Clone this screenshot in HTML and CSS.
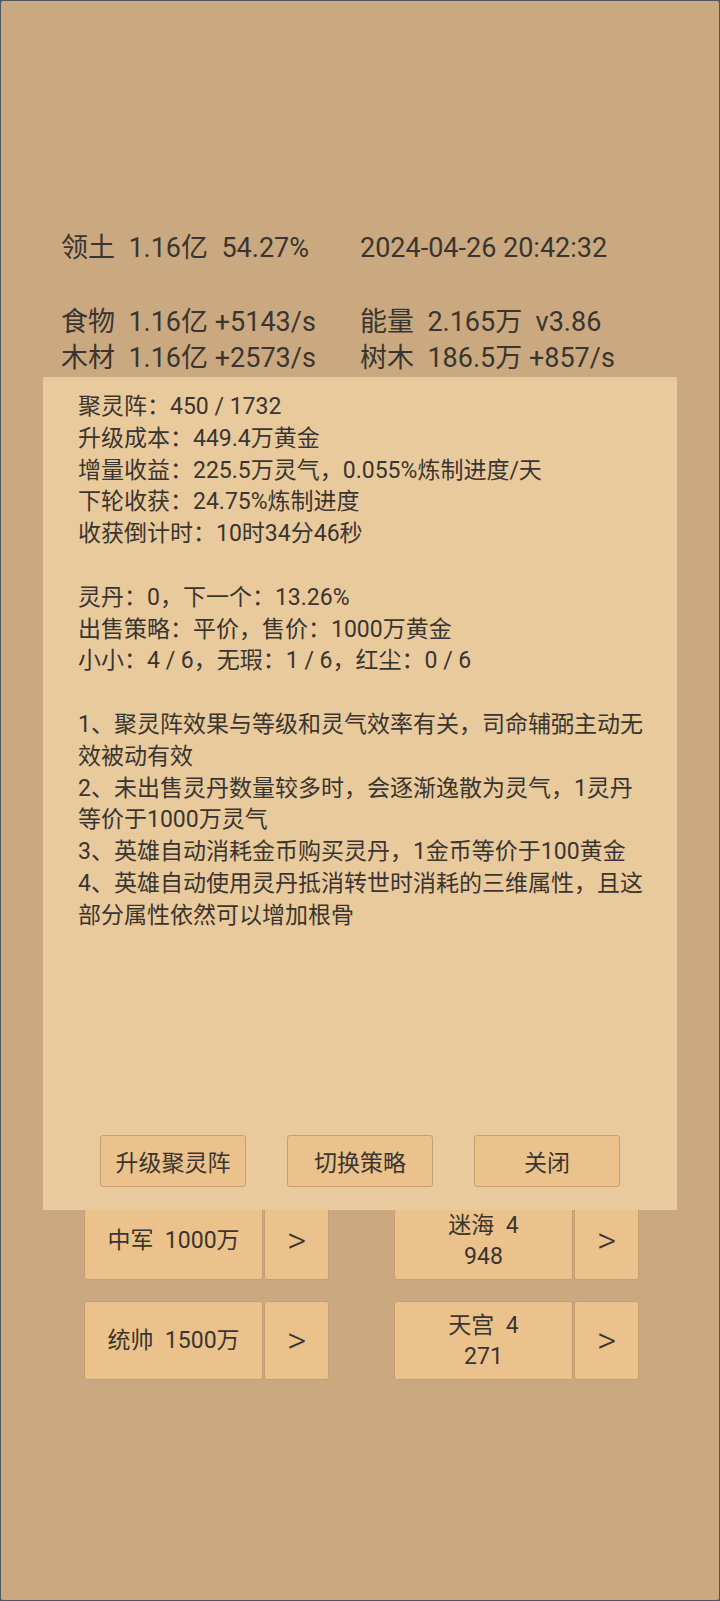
FILE: index.html
```html
<!DOCTYPE html>
<html lang="zh">
  <head>
    <meta charset="UTF-8" />
    <meta name="viewport" content="width=device-width, initial-scale=1.0" />
    <title>聚灵阵</title>
    <link rel="stylesheet" href="styles.css">
  </head>
  <body>
    <div class="screen">
      <section class="stats">
        <div class="stat-row">
          <span>领土  1.16亿  54.27%</span>
          <span>2024-04-26 20:42:32</span>
        </div>
        <div class="stat-grid">
          <span>食物  1.16亿 +5143/s</span>
          <span>能量  2.165万  v3.86</span>
          <span>木材  1.16亿 +2573/s</span>
          <span>树木  186.5万 +857/s</span>
        </div>
      </section>

      <section class="actions">
        <div class="action-row">
          <div class="action-group">
            <button class="action-main">中军  1000万</button>
            <button class="action-go">&gt;</button>
          </div>
          <div class="action-group">
            <button class="action-main">迷海  4<br />948</button>
            <button class="action-go">&gt;</button>
          </div>
        </div>
        <div class="action-row">
          <div class="action-group">
            <button class="action-main">统帅  1500万</button>
            <button class="action-go">&gt;</button>
          </div>
          <div class="action-group">
            <button class="action-main">天宫  4<br />271</button>
            <button class="action-go">&gt;</button>
          </div>
        </div>
      </section>

      <div class="dialog">
        <div class="dialog-body">
          <p>
            聚灵阵：450 / 1732<br />
            升级成本：449.4万黄金<br />
            增量收益：225.5万灵气，0.055%炼制进度/天<br />
            下轮收获：24.75%炼制进度<br />
            收获倒计时：10时34分46秒
          </p>
          <p>
            灵丹：0，下一个：13.26%<br />
            出售策略：平价，售价：1000万黄金<br />
            小小：4 / 6，无瑕：1 / 6，红尘：0 / 6
          </p>
          <p>
            1、聚灵阵效果与等级和灵气效率有关，司命辅弼主动无效被动有效<br />
            2、未出售灵丹数量较多时，会逐渐逸散为灵气，1灵丹等价于1000万灵气<br />
            3、英雄自动消耗金币购买灵丹，1金币等价于100黄金<br />
            4、英雄自动使用灵丹抵消转世时消耗的三维属性，且这部分属性依然可以增加根骨
          </p>
        </div>
        <div class="dialog-buttons">
          <button class="dialog-btn">升级聚灵阵</button>
          <button class="dialog-btn">切换策略</button>
          <button class="dialog-btn">关闭</button>
        </div>
      </div>
    </div>
  </body>
</html>
```

FILE: styles.css
```css
/* Spirit array dialog over the city screen */

body {
  margin: 0;
  padding: 0;
  font-family: Roboto, "Noto Sans CJK SC", sans-serif;
  color: #3a3530;
  background-color: #4f5561;
}

.screen {
  position: relative;
  height: 1601px;
  box-sizing: border-box;
  border: 1px solid #4f5561;
  border-radius: 3px;
  background-color: #caa981;
  overflow: hidden;
}

.stats {
  padding: 229px 0 0 60px;
  font-size: 27px;
  line-height: 36px;
}

.stats span {
  white-space: pre;
}

.stat-row,
.stat-grid {
  display: grid;
  grid-template-columns: 299px auto;
}

.stat-grid {
  margin-top: 38px;
}

.actions {
  margin-top: 825px;
  padding-left: 83px;
  display: flex;
  flex-direction: column;
  gap: 21px;
}

.action-row {
  display: flex;
  gap: 65px;
}

.action-group {
  display: flex;
  gap: 1px;
}

button {
  font-family: Roboto, "Noto Sans CJK SC", sans-serif;
  font-weight: normal;
  color: #3a3530;
  background-color: #ebc28b;
  border: 1px solid #c59f72;
  border-radius: 3px;
  padding: 0;
  margin: 0;
}

.action-main {
  width: 179px;
  height: 79px;
  font-size: 23px;
  line-height: 31px;
  white-space: pre;
}

.action-go {
  width: 65px;
  height: 79px;
  font-size: 37px;
  font-weight: 300;
}

.dialog {
  position: absolute;
  left: 42px;
  top: 376px;
  width: 634px;
  height: 833px;
  box-sizing: border-box;
  background-color: #e9ca9d;
  padding: 14px 22px 23px 35px;
  display: flex;
  flex-direction: column;
}

.dialog-body {
  font-size: 23px;
  line-height: 31.8px;
}

.dialog-body p {
  margin: 0 0 31.8px 0;
}

.dialog-buttons {
  margin-top: auto;
  margin-left: -35px;
  margin-right: -22px;
  display: flex;
  justify-content: center;
  gap: 41px;
}

.dialog-btn {
  width: 146px;
  height: 52px;
  font-size: 23px;
}
```
